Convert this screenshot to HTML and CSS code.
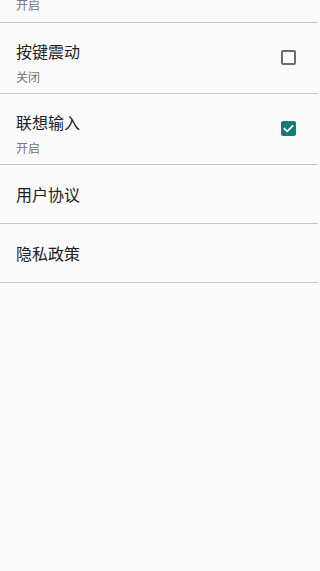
FILE: index.html
```html
<!DOCTYPE html>
<html lang="zh">
<head>
<meta charset="utf-8">
<link rel="stylesheet" href="styles.css">
</head>
<body>
<div class="list">
  <div class="item partial">
    <div class="sub">开启</div>
  </div>
  <div class="item">
    <div class="text">
      <div class="title">按键震动</div>
      <div class="sub">关闭</div>
    </div>
    <span class="check"></span>
  </div>
  <div class="item">
    <div class="text">
      <div class="title">联想输入</div>
      <div class="sub">开启</div>
    </div>
    <span class="check checked">
      <svg viewBox="0 0 16 16" width="15" height="15"><path d="M3.6 8.2 L6.6 11 L12.4 5.2" fill="none" stroke="#fff" stroke-width="1.8" stroke-linecap="square"/></svg>
    </span>
  </div>
  <div class="item single">
    <div class="title">用户协议</div>
  </div>
  <div class="item single">
    <div class="title">隐私政策</div>
  </div>
</div>
</body>
</html>
```
FILE: styles.css
```css
html, body {
  margin: 0;
  padding: 0;
  background: #fafafa;
}
body {
  font-family: "Noto Sans CJK SC", "Noto Sans", sans-serif;
  width: 318px;
  height: 571px;
  overflow: hidden;
}
.list {
  display: flex;
  flex-direction: column;
}
.item {
  display: flex;
  align-items: center;
  justify-content: space-between;
  padding: 16px 22px 7px 16px;
  border-bottom: 1px solid #c6c6c6;
}
.item.partial {
  padding-top: 0;
  padding-bottom: 8px;
  margin-top: -4px;
  height: 18px;
}
.item.single {
  padding-top: 17px;
  padding-bottom: 17px;
}
.title {
  font-size: 16px;
  line-height: 24px;
  color: #212121;
}
.text .title {
  margin-bottom: 5px;
}
.sub {
  font-size: 12px;
  line-height: 18px;
  color: #757575;
}
.check {
  box-sizing: border-box;
  width: 15px;
  height: 15px;
  border: 2px solid #6b6b6b;
  border-radius: 2px;
  display: flex;
  align-items: center;
  justify-content: center;
  margin-top: -10px;
}
.check.checked {
  background: #147d70;
  border-color: #147d70;
}
.check svg {
  display: block;
  flex: none;
}
```
